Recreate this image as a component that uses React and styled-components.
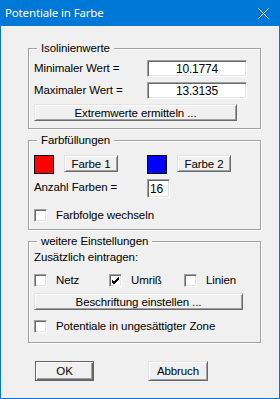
import React from 'react'
import styled, { createGlobalStyle } from 'styled-components'

const GlobalStyle = createGlobalStyle`
  html, body {
    margin: 0;
    padding: 0;
    background: #f0f0f0;
  }
  * {
    box-sizing: border-box;
  }
`

const Window = styled.div`
  width: 280px;
  height: 399px;
  display: flex;
  flex-direction: column;
  background: #f0f0f0;
  border: 1px solid #0078d7;
  border-top: none;
  font-family: "Liberation Sans", Arial, sans-serif;
  font-size: 11.5px;
  letter-spacing: -0.1px;
  color: #000;
`

const TitleBar = styled.div`
  height: 26px;
  margin: 0 -1px;
  background: #0078d7;
  color: #fff;
  display: flex;
  align-items: center;
  justify-content: space-between;
  padding: 0 11px 0 5px;
  flex-shrink: 0;
`

const Title = styled.span`
  font-family: "Noto Sans", "Open Sans", sans-serif;
  font-size: 11.5px;
  letter-spacing: -0.15px;
  line-height: 26px;
`

const Body = styled.div`
  display: flex;
  flex-direction: column;
  padding: 22px 0 0 27px;
`

const Group = styled.div`
  position: relative;
  width: 233px;
  margin-top: ${({ $gap }) => $gap || 0}px;
  padding: ${({ $pad }) => $pad};
  border: 1px solid #a0a0a0;
  box-shadow: inset 1px 1px 0 #fff, 1px 1px 0 #fff;
  display: flex;
  flex-direction: column;
  align-items: flex-start;
`

const Legend = styled.span`
  position: absolute;
  top: -7px;
  left: 8px;
  padding: 0 4px;
  background: #f0f0f0;
  line-height: 13px;
`

const FormRow = styled.div`
  display: grid;
  grid-template-columns: 113px auto;
  align-items: ${({ $align }) => $align || 'center'};
  height: ${({ $h }) => $h || 17}px;
  margin-top: ${({ $mt }) => $mt || 0}px;
`

const Label = styled.span`
  line-height: 13px;
  align-self: ${({ $self }) => $self || 'center'};
  margin-top: ${({ $mt }) => $mt || 0}px;
`

const Note = styled.span`
  line-height: 13px;
`

const Edit = styled.div`
  width: ${({ $w }) => $w}px;
  height: ${({ $h }) => $h || 17}px;
  background: #fff;
  border-style: solid;
  border-width: 1px;
  border-color: #a0a0a0 #fff #fff #a0a0a0;
  box-shadow: inset 1px 1px 0 #696969, inset -1px -1px 0 #e3e3e3;
  display: flex;
  align-items: center;
  justify-content: ${({ $left }) => ($left ? 'flex-start' : 'center')};
  padding: ${({ $left }) => ($left ? '0 0 0 2px' : '0')};
  font-size: 12px;
  letter-spacing: -0.2px;
`

const Button = styled.button`
  width: ${({ $w }) => $w}px;
  height: ${({ $h }) => $h || 17}px;
  margin: ${({ $m }) => $m || 0};
  padding: 0;
  font: inherit;
  letter-spacing: inherit;
  color: #000;
  background: #f0f0f0;
  border-style: solid;
  border-width: 1px;
  border-color: ${({ $default }) =>
    $default ? '#646464' : '#e3e3e3 #696969 #696969 #e3e3e3'};
  box-shadow: ${({ $default }) =>
    $default
      ? 'inset 1px 1px 0 #fff, inset -1px -1px 0 #696969, inset -2px -2px 0 #a0a0a0'
      : 'inset 1px 1px 0 #fff, inset -1px -1px 0 #a0a0a0'};
  cursor: default;
  flex-shrink: 0;
`

const Swatch = styled.div`
  width: 20px;
  height: 19px;
  border: 1px solid #000;
  background: ${({ $color }) => $color};
  flex-shrink: 0;
`

const Cell = styled.div`
  display: flex;
  align-items: flex-start;
  gap: 10px;
`

const CheckRow = styled.div`
  display: flex;
  align-items: center;
  height: 17px;
  margin-top: ${({ $mt }) => $mt || 0}px;
`

const CheckItem = styled.label`
  display: flex;
  align-items: center;
  gap: 9px;
  width: ${({ $w }) => ($w ? `${$w}px` : 'auto')};
  line-height: 13px;
`

const Box = styled.span`
  width: 13px;
  height: 13px;
  background: #fff;
  border-style: solid;
  border-width: 1px;
  border-color: #a0a0a0 #fff #fff #a0a0a0;
  box-shadow: inset 1px 1px 0 #696969, inset -1px -1px 0 #e3e3e3;
  display: flex;
  align-items: center;
  justify-content: center;
  flex-shrink: 0;
`

const Footer = styled.div`
  display: flex;
  margin: 18px 0 0 7px;
`

const Check = ({ checked, children, w }) => (
  <CheckItem $w={w}>
    <Box>
      {checked && (
        <svg width="9" height="9" viewBox="0 0 9 9">
          <path d="M1 4 L3 6 L8 1 M1 5 L3 7 L8 2 M1 6 L3 8 L8 3" stroke="#000" strokeWidth="1" fill="none" />
        </svg>
      )}
    </Box>
    <span>{children}</span>
  </CheckItem>
)

export default function App() {
  return (
    <>
      <GlobalStyle />
      <Window>
        <TitleBar>
          <Title>Potentiale in Farbe</Title>
          <svg width="11" height="11" viewBox="0 0 11 11">
            <path d="M0.5 0.5 L10.5 10.5 M10.5 0.5 L0.5 10.5" stroke="#fff" strokeWidth="1" />
          </svg>
        </TitleBar>
        <Body>
          <Group $pad="11px 0 7px 5px">
            <Legend>Isolinienwerte</Legend>
            <FormRow>
              <Label>Minimaler Wert =</Label>
              <Edit $w={100}>10.1774</Edit>
            </FormRow>
            <FormRow $mt={5}>
              <Label>Maximaler Wert =</Label>
              <Edit $w={100}>13.3135</Edit>
            </FormRow>
            <Button $w={203} $m="5px 0 0 0">Extremwerte ermitteln ...</Button>
          </Group>

          <Group $gap={11} $pad="14px 0 5px 5px">
            <Legend>Farbfüllungen</Legend>
            <FormRow $h={19} $align="start">
              <Cell>
                <Swatch $color="#ff0000" />
                <Button $w={54}>Farbe 1</Button>
              </Cell>
              <Cell>
                <Swatch $color="#0000ff" />
                <Button $w={54}>Farbe 2</Button>
              </Cell>
            </FormRow>
            <FormRow $h={19} $mt={5} $align="start">
              <Label $self="start" $mt={2}>Anzahl Farben =</Label>
              <Edit $w={23} $h={19} $left>16</Edit>
            </FormRow>
            <CheckRow $mt={9}>
              <Check>Farbfolge wechseln</Check>
            </CheckRow>
          </Group>

          <Group $gap={11} $pad="9px 0 7px 5px">
            <Legend>weitere Einstellungen</Legend>
            <Note>Zusätzlich eintragen:</Note>
            <CheckRow $mt={8}>
              <Check w={75}>Netz</Check>
              <Check w={75} checked>Umriß</Check>
              <Check>Linien</Check>
            </CheckRow>
            <Button $w={209} $m="4px 0 0 0">Beschriftung einstellen ...</Button>
            <CheckRow $mt={8}>
              <Check>Potentiale in ungesättigter Zone</Check>
            </CheckRow>
          </Group>

          <Footer>
            <Button $w={59} $h={20} $default>OK</Button>
            <Button $w={60} $h={20} $m="0 0 0 54px">Abbruch</Button>
          </Footer>
        </Body>
      </Window>
    </>
  )
}
